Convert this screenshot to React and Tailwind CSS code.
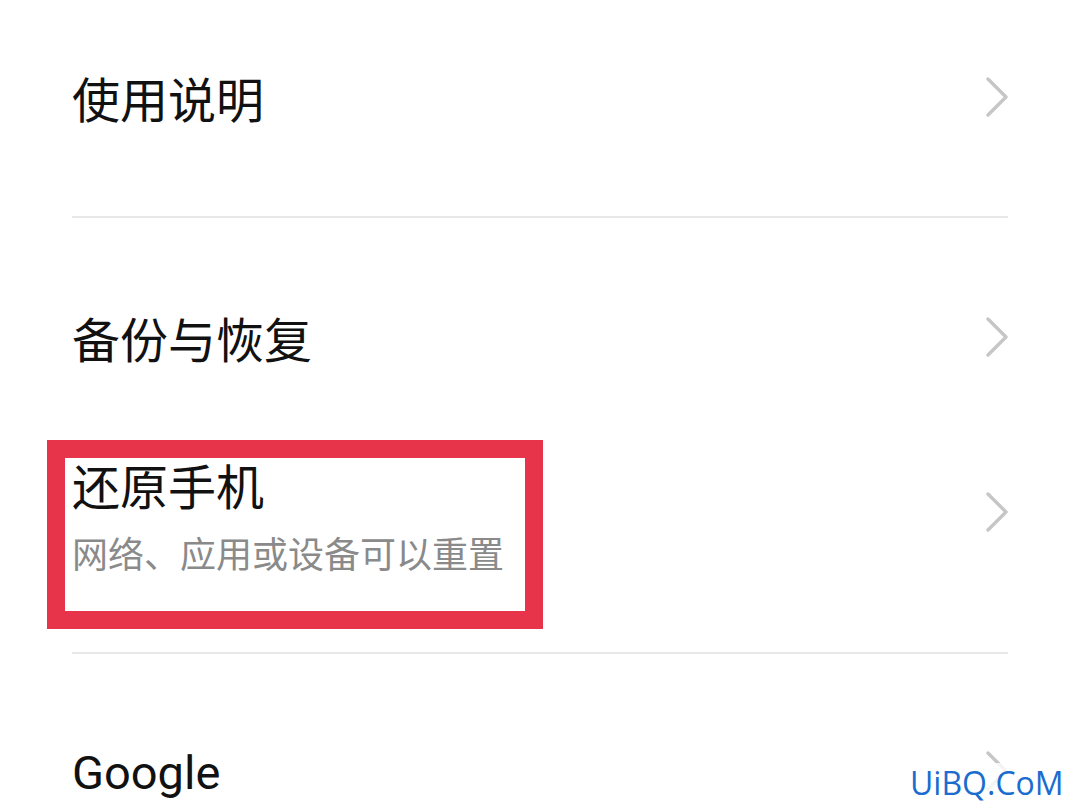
import { useState } from "react";

const CJK = "font-['Noto_Sans_CJK_SC','Noto_Sans',sans-serif]";

// thin grey chevron used on every settings row
const Chevron = ({ className = "" }) => (
  <svg
    width="22"
    height="40"
    viewBox="0 0 22 40"
    fill="none"
    className={className}
  >
    <polyline
      points="2,2 20,20 2,38"
      stroke="#c6c6c6"
      strokeWidth="3.4"
      strokeLinecap="round"
      strokeLinejoin="round"
    />
  </svg>
);

const Divider = () => <div className="h-[2px] bg-[#e8e8e8]" />;

export default function App() {
  const [items] = useState([
    { id: "guide", title: "使用说明" },
    { id: "backup", title: "备份与恢复" },
  ]);

  return (
    <div className={`relative w-[1080px] h-[810px] overflow-hidden bg-white ${CJK}`}>
      <div className="px-[72px]">
        {/* 使用说明 */}
        <div className="flex items-center justify-between h-[194px] mb-[22px]">
          <span className="text-[48px] leading-[48px] text-[#111]">
            {items[0].title}
          </span>
          <Chevron />
        </div>
        <Divider />

        {/* 备份与恢复 */}
        <div className="flex items-center justify-between h-[238px]">
          <span className="text-[48px] leading-[48px] text-[#111]">
            {items[1].title}
          </span>
          <Chevron />
        </div>

        {/* 还原手机 */}
        <div className="flex items-center justify-between pt-[4px] mb-[80px]">
          <div className="flex flex-col">
            <span className="text-[48px] leading-[48px] text-[#111]">
              还原手机
            </span>
            <span className="mt-[24px] text-[36px] leading-[40px] text-[#8a8a8a]">
              网络、应用或设备可以重置
            </span>
          </div>
          <Chevron className="mb-[8px]" />
        </div>
        <Divider />

        {/* Google */}
        <div className="flex items-center justify-between h-[238px]">
          <span className="font-['Roboto',sans-serif] text-[47px] leading-[48px] text-[#111]">
            Google
          </span>
          <Chevron className="mb-[4px]" />
        </div>
      </div>

      {/* annotation frame */}
      <div className="absolute left-[47px] top-[440px] w-[496px] h-[189px] border-[18px] border-[#e8344a]" />

      {/* watermark */}
      <span className="absolute left-[910px] top-[763px] font-['Open_Sans',sans-serif] text-[32px] leading-[40px] text-[#1a6ccf] bg-white/80">
        UiBQ.CoM
      </span>
    </div>
  );
}
